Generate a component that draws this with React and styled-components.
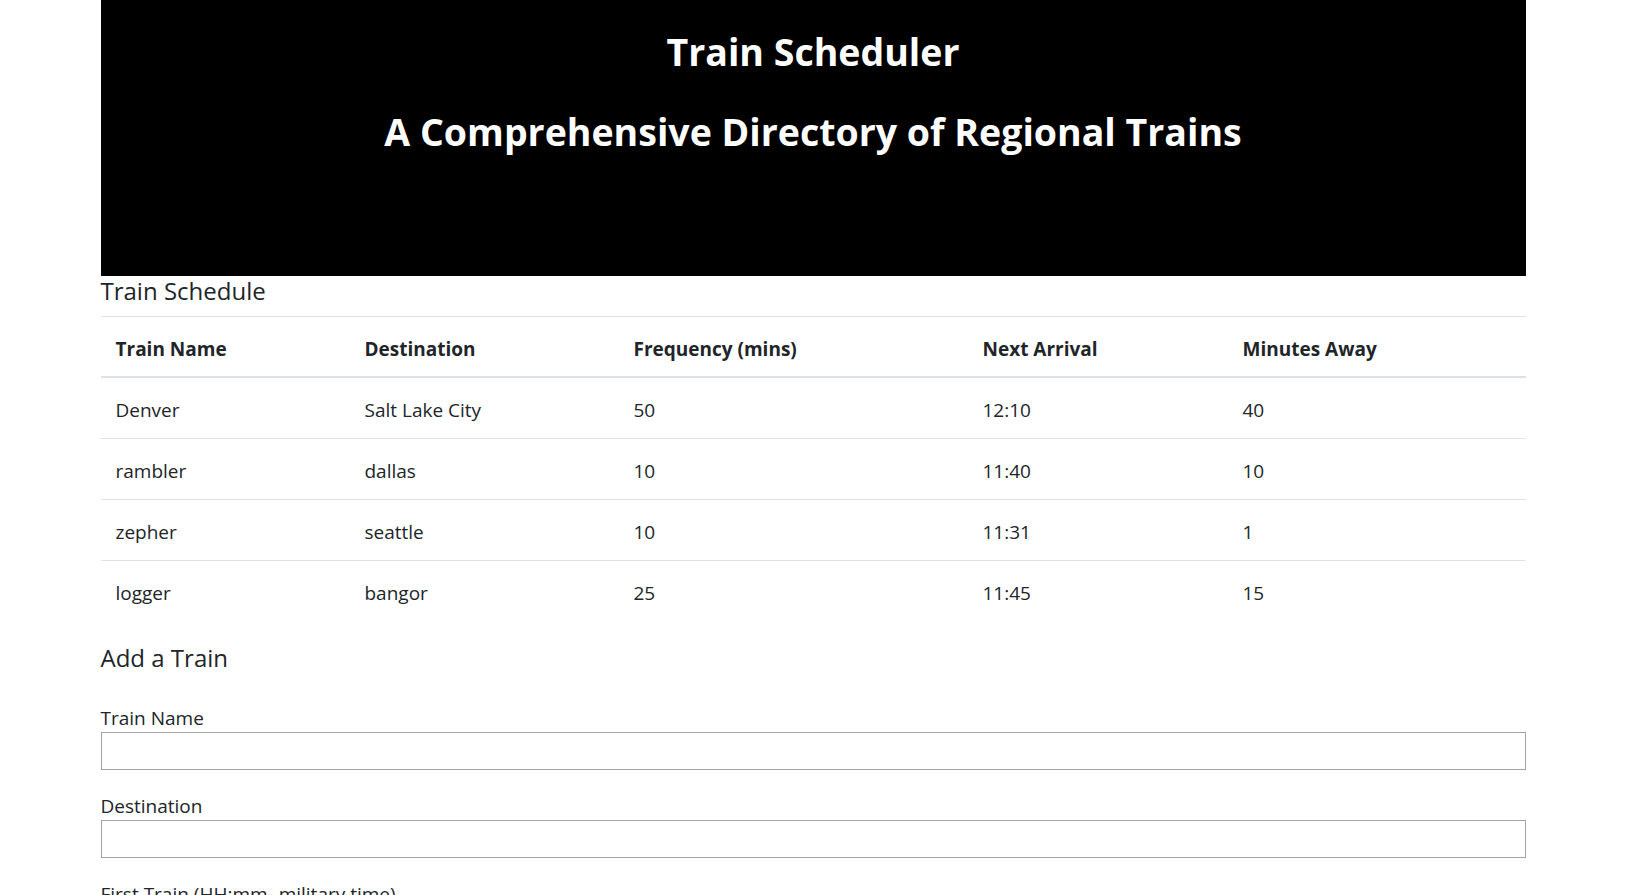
import React from "react";
import styled, { createGlobalStyle } from "styled-components";

const GlobalStyle = createGlobalStyle`
  * {
    box-sizing: border-box;
  }
  body {
    margin: 0;
    background: #fff;
    color: #212529;
    font-family: "Open Sans", "Noto Sans", sans-serif;
    font-size: 19px;
    line-height: 30px;
  }
`;

const Container = styled.div`
  width: 1425px;
  margin: 0 auto;
`;

const Banner = styled.header`
  height: 276px;
  padding-top: 28px;
  background: #000;
  color: #fff;
  text-align: center;
`;

const BannerTitle = styled.h1`
  margin: 0 0 32px;
  font-size: 37.5px;
  line-height: 48px;
  font-weight: 700;
`;

const SectionTitle = styled.h5`
  margin: 0 0 ${(p) => p.gap || 10}px;
  font-size: 24px;
  line-height: 30px;
  font-weight: 500;
`;

const Table = styled.table`
  width: 100%;
  margin-bottom: 22px;
  border-collapse: collapse;
  table-layout: fixed;
`;

const HeadCell = styled.th`
  padding: 17px 15px 12px;
  text-align: left;
  font-weight: 700;
  border-top: 1px solid #dee2e6;
  border-bottom: 2px solid #dee2e6;
`;

const Cell = styled.td`
  padding: 17px 15px 13px;
  border-top: 1px solid #dee2e6;
`;

const FormGroup = styled.div`
  margin-bottom: 20px;
`;

const Label = styled.label`
  display: block;
  padding-top: 2px;
  line-height: 28px;
`;

const Input = styled.input`
  display: block;
  width: 100%;
  height: 38px;
  margin: 0;
  padding: 4px 8px;
  border: 1px solid #a3a3a3;
  border-radius: 0;
  font: inherit;
  background: #fff;
`;

const columns = [
  { label: "Train Name", width: 249 },
  { label: "Destination", width: 269 },
  { label: "Frequency (mins)", width: 349 },
  { label: "Next Arrival", width: 260 },
  { label: "Minutes Away", width: 298 },
];

const trains = [
  ["Denver", "Salt Lake City", "50", "12:10", "40"],
  ["rambler", "dallas", "10", "11:40", "10"],
  ["zepher", "seattle", "10", "11:31", "1"],
  ["logger", "bangor", "25", "11:45", "15"],
];

const fields = [
  "Train Name",
  "Destination",
  "First Train (HH:mm- military time)",
  "Frequency (min)",
];

export default function App() {
  return (
    <>
      <GlobalStyle />
      <Container>
        <Banner>
          <BannerTitle>Train Scheduler</BannerTitle>
          <BannerTitle>A Comprehensive Directory of Regional Trains</BannerTitle>
        </Banner>

        <SectionTitle>Train Schedule</SectionTitle>
        <Table>
          <colgroup>
            {columns.map((c) => (
              <col key={c.label} style={{ width: c.width }} />
            ))}
          </colgroup>
          <thead>
            <tr>
              {columns.map((c) => (
                <HeadCell key={c.label}>{c.label}</HeadCell>
              ))}
            </tr>
          </thead>
          <tbody>
            {trains.map((row) => (
              <tr key={row[0]}>
                {row.map((v, i) => (
                  <Cell key={i}>{v}</Cell>
                ))}
              </tr>
            ))}
          </tbody>
        </Table>

        <SectionTitle gap={29}>Add a Train</SectionTitle>
        <form onSubmit={(e) => e.preventDefault()}>
          {fields.map((f) => (
            <FormGroup key={f}>
              <Label>{f}</Label>
              <Input type="text" />
            </FormGroup>
          ))}
        </form>
      </Container>
    </>
  );
}
